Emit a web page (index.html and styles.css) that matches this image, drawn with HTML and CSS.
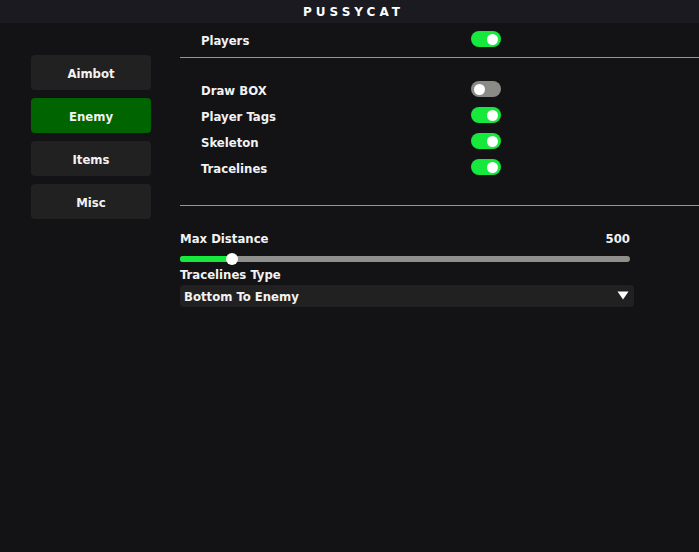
FILE: index.html
```html
<!DOCTYPE html>
<html>
<head>
<meta charset="utf-8">
<link rel="stylesheet" href="styles.css">
</head>
<body>
<div class="window">
  <div class="titlebar">PUSSYCAT</div>
  <div class="main">
    <nav class="sidebar">
      <div class="tab">Aimbot</div>
      <div class="tab active">Enemy</div>
      <div class="tab">Items</div>
      <div class="tab">Misc</div>
    </nav>
    <section class="content">
      <div class="row first">
        <span class="label">Players</span>
        <span class="toggle on"></span>
      </div>
      <hr class="divider">
      <div class="group">
        <div class="row">
          <span class="label">Draw BOX</span>
          <span class="toggle"></span>
        </div>
        <div class="row">
          <span class="label">Player Tags</span>
          <span class="toggle on"></span>
        </div>
        <div class="row">
          <span class="label">Skeleton</span>
          <span class="toggle on"></span>
        </div>
        <div class="row">
          <span class="label">Tracelines</span>
          <span class="toggle on"></span>
        </div>
      </div>
      <hr class="divider second">
      <div class="settings">
        <div class="slider-head">
          <span>Max Distance</span>
          <span>500</span>
        </div>
        <div class="slider">
          <div class="fill" style="width: 52px"></div>
          <div class="knob" style="left: 52px"></div>
        </div>
        <div class="field-label">Tracelines Type</div>
        <div class="dropdown">
          <span>Bottom To Enemy</span>
          <svg class="arrow" width="12" height="9" viewBox="0 0 12 9"><polygon points="0.5,0.5 11.5,0.5 6,8.5" fill="#ffffff"/></svg>
        </div>
      </div>
    </section>
  </div>
</div>
</body>
</html>
```

FILE: styles.css
```css
html, body {
  margin: 0;
  padding: 0;
  background: #131316;
}
body {
  width: 699px;
  height: 552px;
  overflow: hidden;
  font-family: "DejaVu Sans Condensed", "DejaVu Sans", sans-serif;
  font-stretch: condensed;
  font-weight: bold;
  font-size: 13px;
  color: #f2f2f2;
}
.window {
  height: 552px;
  background: #131316;
}
.titlebar {
  height: 23px;
  background: #1b1a20;
  color: #ffffff;
  font-family: "DejaVu Sans", sans-serif;
  font-stretch: normal;
  font-size: 12px;
  letter-spacing: 4px;
  line-height: 25px;
  text-align: center;
  padding-left: 8px;
  box-sizing: border-box;
}
.main {
  display: flex;
}
.sidebar {
  width: 120px;
  margin-left: 31px;
  padding-top: 32px;
  display: flex;
  flex-direction: column;
  gap: 8px;
}
.tab {
  height: 35px;
  border-radius: 4px;
  background: #212121;
  display: flex;
  align-items: center;
  justify-content: center;
  padding-top: 2px;
  box-sizing: border-box;
  color: #f2f2f2;
}
.tab.active {
  background: #006400;
}
.content {
  margin-left: 29px;
  flex: 1;
}
.row {
  height: 26px;
  display: grid;
  grid-template-columns: 270px 30px;
  align-items: center;
  padding-left: 21px;
}
.row.first {
  margin-top: 3px;
}
.label {
  line-height: 16px;
  padding-top: 3px;
}
.toggle {
  width: 30px;
  height: 16px;
  border-radius: 8px;
  background: #8a8a86;
  position: relative;
}
.toggle::after {
  content: "";
  position: absolute;
  width: 11px;
  height: 11px;
  border-radius: 50%;
  background: #ffffff;
  top: 2.5px;
  left: 3px;
}
.toggle.on {
  background: #17e83c;
}
.toggle.on::after {
  left: 16px;
}
.divider {
  border: 0;
  height: 1px;
  background: #17e83c;
  margin: 5px 0 0 0;
}
.group {
  margin-top: 18px;
}
.divider.second {
  margin-top: 25px;
}
.settings {
  width: 454px;
  padding-top: 25px;
}
.slider-head {
  width: 450px;
  display: flex;
  justify-content: space-between;
  line-height: 16px;
}
.slider {
  position: relative;
  width: 450px;
  height: 6px;
  border-radius: 3px;
  background: #8f8f8b;
  margin-top: 9px;
}
.fill {
  height: 6px;
  border-radius: 3px 0 0 3px;
  background: #17e83c;
}
.knob {
  position: absolute;
  top: -3px;
  width: 12px;
  height: 12px;
  margin-left: -6px;
  border-radius: 50%;
  background: #ffffff;
}
.field-label {
  margin-top: 5px;
  line-height: 16px;
}
.dropdown {
  margin-top: 2px;
  height: 22px;
  border-radius: 4px;
  background: #212121;
  display: flex;
  align-items: center;
  justify-content: space-between;
  padding: 1px 5px 0 4px;
  box-sizing: border-box;
}
.arrow {
  display: block;
  margin-top: -2px;
}
```
